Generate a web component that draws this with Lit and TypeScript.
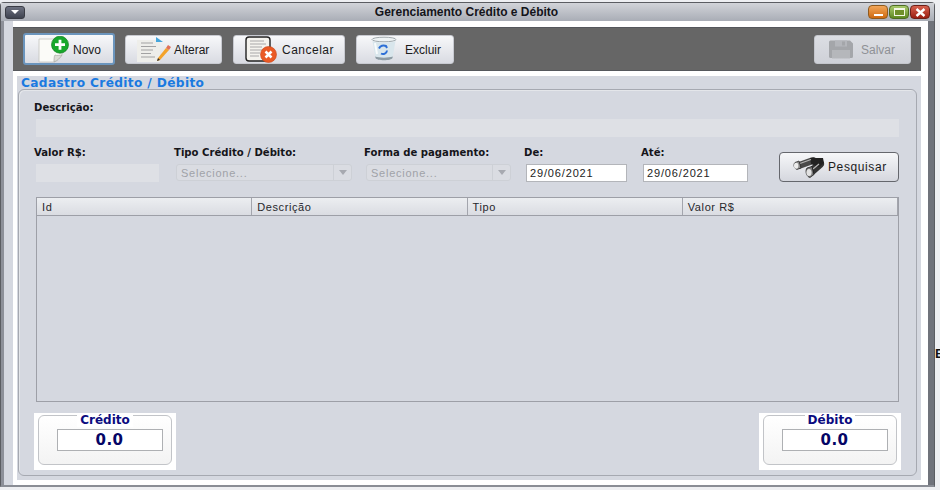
import { LitElement, html, css, svg } from "lit";
import { customElement } from "lit/decorators.js";

const docPlus = svg`<svg width="32" height="27" viewBox="0 0 32 27"><path d="M1 3h23v16c-2 3-5 6-8 7H1z" fill="#fbfbf8" stroke="#c4c4be" stroke-width=".8"/><path d="M16 26c0-2 0-6 1-7 2 1 5 0 7 0-2 3-5 6-8 7z" fill="#dcdcd6" stroke="#a9a9a4" stroke-width=".7"/><circle cx="22" cy="8.700" r="8.500" fill="#18a82c" stroke="#0f7d1e" stroke-width=".7"/><path d="M22 3.700v10M17 8.700h10" stroke="#fff" stroke-width="2.800"/></svg>`;
const edit = svg`<svg width="34" height="28" viewBox="0 0 34 28"><rect x="0" y="5" width="23" height="22" fill="#eeeeea"/><path d="M4 8h12M4 11.500h15M4 15h12M4 18.500h10M4 22h14" stroke="#a2a2a2" stroke-width="1.100"/><path d="M19 2l7 5h-7z" fill="#45a6dc"/><path d="M21 23l-1 3 3-1 9-10-3-2z" fill="#f3a32b"/><path d="M29 13l3 2 2-3-3-2z" fill="#e0705a"/><path d="M20 26l1-3 2 2z" fill="#333"/></svg>`;
const cancel = svg`<svg width="34" height="28" viewBox="0 0 34 28"><rect x="1" y="2" width="24" height="24" rx="3" fill="#f4f3ee" stroke="#222" stroke-width="1.400"/><path d="M5 6h14M5 9h16M5 12h12M5 15h14M5 18h10M5 21h9" stroke="#a8a8a8" stroke-width="1.200"/><circle cx="23.500" cy="19.500" r="8" fill="#ea5a25" stroke="#c8441a" stroke-width=".6"/><path d="M20.500 16.500l6 6M26.500 16.500l-6 6" stroke="#fff" stroke-width="2.500"/></svg>`;
const trash = svg`<svg width="26" height="26" viewBox="0 0 26 26"><ellipse cx="13" cy="3.500" rx="12" ry="2.300" fill="#eef3f5" stroke="#8b959a" stroke-width=".8"/><path d="M1.500 5l3 17c1 3 16 3 17 0l3-17c-3 2-20 2-23 0z" fill="#d9e6ec"/><path d="M4.200 20.500l.3 1.500c1 3 16 3 17 0l.3-1.500c-4 1.500-14 1.500-17.600 0z" fill="#8e9ba3"/><path d="M4 7l2 11" stroke="#f8fbfc" stroke-width="2"/><path d="M8 12.500a5 5 0 0 1 7-2.500l1 2M16 14.500a4 4 0 0 1-6 3" fill="none" stroke="#2d6fd6" stroke-width="2"/></svg>`;
const disk = svg`<svg width="26" height="19" viewBox="0 0 26 19"><path d="M1 2a1.500 1.500 0 0 1 1.500-1.500H22l3 3v13a1.500 1.500 0 0 1-1.500 1.500h-21A1.500 1.500 0 0 1 1 17z" fill="#a4a6aa"/><rect x="7" y=".5" width="12" height="6" fill="#b4b6bb"/><rect x="14" y="1.500" width="3" height="4" fill="#a4a6aa"/><rect x="4" y="10" width="18" height="8.500" fill="#b5b7bb"/></svg>`;
const binoculars = svg`<svg width="33" height="22" viewBox="0 0 33 22"><path d="M7 9.500L21 4.500" stroke="#4a4a4a" stroke-width="7" stroke-linecap="round"/><path d="M20 15L28 8" stroke="#333" stroke-width="8" stroke-linecap="round"/><path d="M18 2h13l1 5-5 4-8-3z" fill="#222"/><path d="M8 7.500l11-4M21 13l6-5" stroke="#b5b5b5" stroke-width="1.200"/><path d="M3 6.500l4-1.500 2 7-4 1.500c-3-1-4-5-2-7z" fill="#8e8e8e" stroke="#222" stroke-width=".7"/><ellipse cx="4.200" cy="9.800" rx="2.200" ry="3" fill="#ececec"/><path d="M15 12l5-1.500 2 8-4 3c-4-1-5-7-3-9.500z" fill="#777" stroke="#111" stroke-width=".7"/><ellipse cx="17" cy="16.500" rx="2.600" ry="3.600" fill="#e2e2e2"/></svg>`;
const closeX = svg`<svg width="11" height="9" viewBox="0 0 11 9"><path d="M1.500 1l8 7M9.500 1l-8 7" stroke="#fff" stroke-width="2.400"/></svg>`;

@customElement("app-root")
export class AppRoot extends LitElement {
  static styles = css`
    :host { display: block; width: 940px; height: 490px; overflow: hidden; background: #eeeff2; position: relative; font-family: "Liberation Sans", Arial, sans-serif; }
    .page { display: flex; height: 490px; padding-top: 2px; box-sizing: border-box; }
    .win { width: 935px; height: 485px; box-sizing: border-box; border: 1px solid #5b5d62; border-bottom: 2px solid #8a8d95; border-radius: 4px 4px 0 0; display: flex; flex-direction: column; background: #d5d8e0; }
    .title { height: 18px; flex: none; background: linear-gradient(#d2d4d9, #a9adb6); display: flex; align-items: center; padding: 0 4px 0 4px; }
    .menu-btn { width: 20px; height: 13px; border-radius: 3px; background: linear-gradient(#6d7180, #3f4350); border: 1px solid #3a3c45; display: flex; align-items: center; justify-content: center; box-sizing: border-box; }
    .menu-btn i { border-left: 4px solid transparent; border-right: 4px solid transparent; border-top: 4px solid #fff; }
    .title-text { flex: 1; text-align: center; font-size: 12px; font-weight: 700; color: #14141a; padding-left: 40px; }
    .ctl { display: flex; gap: 1px; }
    .ctl span { width: 20px; height: 14px; border-radius: 4px; display: flex; align-items: center; justify-content: center; box-sizing: border-box; }
    .ctl .min { background: linear-gradient(#f2a65a, #cf6a10); border: 1px solid #8f5a1e; }
    .ctl .min i { width: 9px; height: 2px; background: #fff; margin-top: 5px; }
    .ctl .max { background: linear-gradient(#aacb6e, #5f8a22); border: 1px solid #4f6c22; }
    .ctl .max i { width: 11px; height: 8px; border: 1.500px solid #f4f7e4; border-top-width: 2px; background: #6f8f2a; box-sizing: border-box; }
    .ctl .cls { background: linear-gradient(#d8624f, #9c1f12); border: 1px solid #6e2018; }
    .frame { flex: 1; display: flex; padding-left: 9px; border-left: 3px solid #8d9099; border-right: 6px solid #70737b; min-height: 0; box-sizing: border-box; }
    .inner { flex: 1; background: #fff; padding: 6px 7px 5px 0; display: flex; flex-direction: column; min-width: 0; }
    .toolbar { height: 44px; flex: none; background: #666; border-top: 1px solid #55575c; border-bottom: 1px solid #55575c; box-sizing: border-box; display: flex; align-items: center; padding: 0 10px; }
    .tb { height: 29px; box-sizing: border-box; border-radius: 3px; background: linear-gradient(#f7f8fa, #d9dbe2); border: 1px solid #c8cad1; display: flex; align-items: center; font-size: 12px; color: #1a1a1a; flex: none; }
    .tb svg { flex: none; }
    .tb span { padding-top: 1px; }
    .tb.novo { width: 92px; height: 32px; border: 2px solid #6b95bd; padding-left: 13px; margin-right: 10px; gap: 3px; }
    .tb.alt { width: 97px; padding-left: 11px; margin-right: 11px; gap: 3px; }
    .tb.can { width: 112px; padding-left: 11px; margin-right: 11px; gap: 3px; letter-spacing: .5px; }
    .tb.exc { width: 98px; padding-left: 14px; gap: 8px; }
    .tb.sal { width: 97px; margin-left: auto; padding-left: 13px; gap: 7px; color: #8f9196; background: linear-gradient(#dcdee3, #cfd1d8); border-color: #c4c6cc; }
    .body { flex: 1; margin: 5px 0 0 4px; background: #d5d8e0; padding: 1px 4px 4px 1px; display: flex; flex-direction: column; min-height: 0; }
    .legend { font-family: "DejaVu Sans", sans-serif; font-size: 12.200px; font-weight: 700; color: #1a7ae0; letter-spacing: .35px; line-height: 12px; margin-left: 3px; }
    .group { flex: 1; border: 1px solid #a6a9b1; border-radius: 6px; box-sizing: border-box; padding: 12px 15px 0 15px; display: flex; flex-direction: column; box-shadow: inset 1px 1px 0 #e4e6ea; }
    label { font-family: "DejaVu Sans", sans-serif; font-weight: 700; font-size: 10.100px; color: #15151a; display: block; line-height: 12px; }
    .desc { height: 18px; margin: 5px 2px 0 2px; background: #dee0e5; }
    .row { display: flex; margin-top: 10px; height: 50px; align-items: flex-start; }
    .f { display: flex; flex-direction: column; gap: 5px; flex: none; }
    .f1 { width: 140px; }
    .f2 { width: 190px; }
    .f3 { width: 160px; }
    .f4 { width: 117px; }
    .f5 { width: 136px; }
    .val { width: 123px; height: 18px; margin-left: 2px; background: #dee0e5; }
    .sel { height: 17px; box-sizing: border-box; border: 1px solid #cdd0d6; border-radius: 3px; background: #dadce2; margin-left: 2px; display: flex; align-items: center; color: #a0a2a8; font-size: 11px; letter-spacing: .75px; padding-left: 4px; width: 176px; }
    .f3 .sel { width: 145px; }
    .sel b { margin-left: auto; width: 17px; height: 100%; border-left: 1px solid #cdd0d6; display: flex; align-items: center; justify-content: center; }
    .sel b i { border-left: 4px solid transparent; border-right: 4px solid transparent; border-top: 5px solid #a7a9b0; }
    .date { width: 101px; height: 18px; box-sizing: border-box; border: 1px solid #b3b5ba; background: #fff; margin-left: 2px; font-size: 11px; letter-spacing: .85px; color: #222; padding-left: 3px; display: flex; align-items: center; }
    .f5 .date { width: 105px; }
    .search { width: 120px; height: 30px; box-sizing: border-box; margin: 5px 0 0 2px; border: 1px solid #65676d; border-radius: 4px; background: linear-gradient(#f6f7f9, #d5d7de); display: flex; align-items: center; gap: 3px; padding-left: 12px; font-size: 12px; color: #1b1b1b; letter-spacing: .6px; flex: none; }
    .search svg { flex: none; }
    .table { height: 205px; flex: none; margin: 0 2px 0 2px; border: 1px solid #9d9fa7; box-sizing: border-box; display: flex; flex-direction: column; }
    .thead { height: 18px; flex: none; display: grid; grid-template-columns: repeat(4, 1fr); background: linear-gradient(#eceef1, #dadce2); border-bottom: 1px solid #9d9fa7; box-sizing: border-box; }
    .thead span { font-size: 11px; color: #27272c; letter-spacing: .6px; padding-left: 5px; border-right: 1px solid #a3a5ad; display: flex; align-items: center; }
    .totals { display: flex; justify-content: space-between; margin-top: 11px; }
    .tot { width: 142px; height: 57px; background: #fff; padding: 2px 4px 5px 4px; box-sizing: border-box; position: relative; }
    .tot .box { height: 100%; box-sizing: border-box; border: 1px solid #c2c4c8; border-radius: 6px; background: linear-gradient(#fff, #f3f3f3); display: flex; justify-content: center; padding-top: 13px; }
    .tot .cap { position: absolute; top: 0; left: 0; right: 0; display: flex; justify-content: center; }
    .tot .cap span { background: #fff; padding: 0 3px; font-family: "DejaVu Sans", sans-serif; font-weight: 700; font-size: 12px; line-height: 14px; color: #0b0b80; }
    .tot .out { width: 106px; height: 22px; margin-left: 9px; box-sizing: border-box; border: 1px solid #aeb0b3; background: #fff; text-align: center; font-family: "DejaVu Sans", sans-serif; font-weight: 700; font-size: 15px; line-height: 20px; color: #050566; letter-spacing: .5px; }
    .clip { position: absolute; left: 935px; top: 346px; font-weight: 700; font-size: 13px; color: #111; }
  `;
  render() {
    return html`<div class="page"><div class="win">
      <div class="title">
        <div class="menu-btn"><i></i></div>
        <div class="title-text">Gerenciamento Crédito e Débito</div>
        <div class="ctl"><span class="min"><i></i></span><span class="max"><i></i></span><span class="cls">${closeX}</span></div>
      </div>
      <div class="frame"><div class="inner">
        <div class="toolbar">
          <div class="tb novo">${docPlus}<span>Novo</span></div>
          <div class="tb alt">${edit}<span>Alterar</span></div>
          <div class="tb can">${cancel}<span>Cancelar</span></div>
          <div class="tb exc">${trash}<span>Excluir</span></div>
          <div class="tb sal">${disk}<span>Salvar</span></div>
        </div>
        <div class="body">
          <div class="legend">Cadastro Crédito / Débito</div>
          <div class="group">
            <label>Descrição:</label>
            <div class="desc"></div>
            <div class="row">
              <div class="f f1"><label>Valor R$:</label><div class="val"></div></div>
              <div class="f f2"><label>Tipo Crédito / Débito:</label><div class="sel">Selecione...<b><i></i></b></div></div>
              <div class="f f3"><label>Forma de pagamento:</label><div class="sel">Selecione...<b><i></i></b></div></div>
              <div class="f f4"><label>De:</label><div class="date">29/06/2021</div></div>
              <div class="f f5"><label>Até:</label><div class="date">29/06/2021</div></div>
              <div class="search">${binoculars}<span>Pesquisar</span></div>
            </div>
            <div class="table">
              <div class="thead"><span>Id</span><span>Descrição</span><span>Tipo</span><span>Valor R$</span></div>
            </div>
            <div class="totals">
              <div class="tot"><div class="box"><div class="out">0.0</div></div><div class="cap"><span>Crédito</span></div></div>
              <div class="tot"><div class="box"><div class="out">0.0</div></div><div class="cap"><span>Débito</span></div></div>
            </div>
          </div>
        </div>
      </div></div>
    </div></div>
    <div class="clip">E</div>`;
  }
}
